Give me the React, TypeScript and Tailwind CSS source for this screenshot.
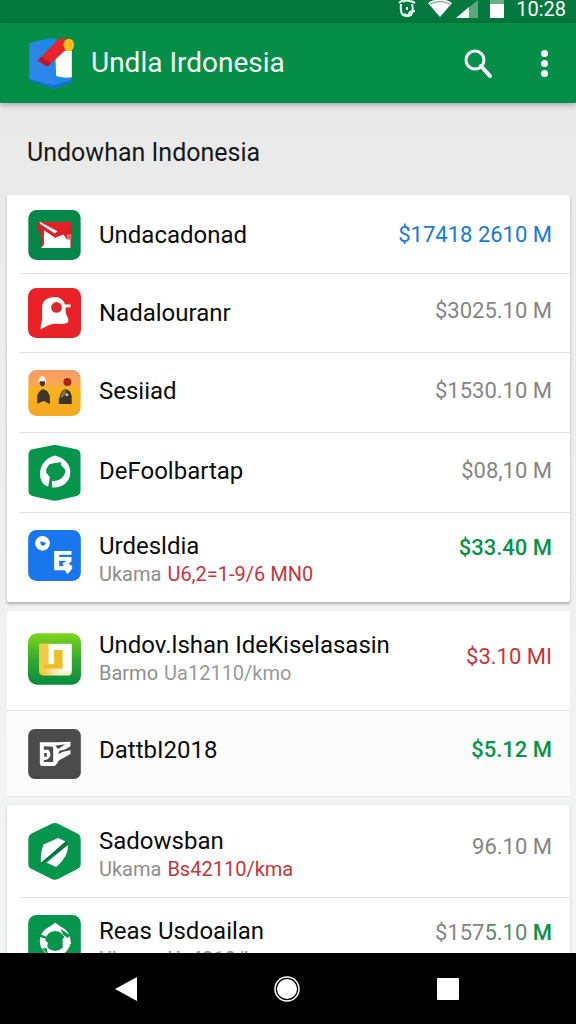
import type { ReactNode } from "react";

type Entry = {
  title: string;
  icon: ReactNode;
  price: ReactNode;
  tone: string;
  row: string;
  note?: { label: string; value: string; tone: string };
  textPad?: string;
  pricePad?: string;
};

const GRAY = "text-[#858585]";
const RED = "text-[#c9333a]";
const GREEN = "text-[#069447]";

function Logo() {
  return (
    <svg viewBox="84 106 140 162" className="h-[54px] w-[47px]" aria-hidden>
      <path d="M88 128 150 112 214 126V246L160 264 88 236Z" fill="#1e88e5" />
      <path d="M88 128 122 119V180L166 204V264L88 236Z" fill="#2b86ea" />
      <path d="M88 236 160 254 214 238V247L160 265 88 240Z" fill="#1473cc" />
      <path d="M166 176 192 150H215V230Q190 234 168 226Z" fill="#fff" />
      <path d="M112 180 176 114H206V138L142 198Z" fill="#e8232a" />
      <path d="M112 180 124 168 152 188 142 198Z" fill="#b5172b" />
      <ellipse cx="206" cy="133" rx="16" ry="19" fill="#fbbc14" />
    </svg>
  );
}

function MailIcon() {
  return (
    <svg viewBox="84 59 158 151" className="h-[50px] w-[53px]" aria-hidden>
      <rect x="84" y="59" width="158" height="151" rx="25" fill="#06874a" />
      <path d="M113 95H215V174H122V136L113 118Z" fill="#d71f26" />
      <path d="M131 120 165 143 190 133 200 147H211V174H122L131 164Z" fill="#fff" />
      <path d="M117 95H213V112L168 139 118 104Z" fill="#e02128" />
      <path d="M117 94 172 123 164 130 121 102Z" fill="#fff" />
      <path d="M200 132H214V147H200Z" fill="#e9656b" />
    </svg>
  );
}

function BirdIcon() {
  return (
    <svg viewBox="84 294 158 149" className="h-[50px] w-[53px]" aria-hidden>
      <rect x="84" y="294" width="158" height="149" rx="25" fill="#e92227" />
      <path
        d="M126 349C128 329 145 321 164 321 183 322 192 334 194 343L211 343V351L196 352C195 366 198 376 204 384V396C193 402 181 401 170 401 152 400 139 408 122 418 120 408 126 397 126 382Z"
        fill="#fff"
      />
      <circle cx="169" cy="352" r="16" fill="#e92227" />
      <circle cx="169" cy="353" r="12" fill="#d9292c" />
    </svg>
  );
}

function PeopleIcon() {
  return (
    <svg viewBox="84 59 158 139" className="h-[46px] w-[53px]" aria-hidden>
      <defs>
        <linearGradient id="people" x1="0" y1="0" x2="0" y2="1">
          <stop offset="0" stopColor="#f69a63" />
          <stop offset=".34" stopColor="#f8a84f" />
          <stop offset=".4" stopColor="#f9b51b" />
          <stop offset="1" stopColor="#f3a723" />
        </linearGradient>
      </defs>
      <rect x="84" y="59" width="158" height="139" rx="25" fill="url(#people)" />
      <path d="M113 95Q117 78 126 76 137 80 139 97L126 103Z" fill="#fff2de" />
      <path d="M118 93H134Q136 108 126 109 117 106 118 93Z" fill="#46332c" />
      <circle cx="202" cy="95" r="12" fill="#ad2412" />
      <path d="M111 161V135Q118 118 129 117 143 119 149 138V162L130 153Z" fill="#40352b" />
      <path d="M176 162V148Q183 116 197 117 211 119 215 138V162Z" fill="#3a3425" />
      <path d="M180 143Q184 122 195 119L200 131 188 141Z" fill="#7b7132" />
      <circle cx="201" cy="134" r="4" fill="#d8d4c0" />
    </svg>
  );
}

function CycleIcon() {
  return (
    <svg viewBox="84 282 158 170" className="h-[56px] w-[53px]" aria-hidden>
      <path
        d="M84 311Q84 299 96 295L150 284Q164 280 178 284L230 295Q242 299 242 311V422Q242 433 230 437L178 449Q164 454 150 449L96 437Q84 433 84 422Z"
        fill="#06954c"
      />
      <path
        d="M120 380C115 350 132 322 165 314 193 322 211 340 211 364 211 392 190 413 156 411L155 391C177 394 192 381 196 362L181 344 183 336C160 334 143 345 137 365L149 380 144 408C130 405 123 394 120 380Z"
        fill="#fff"
      />
      <path d="M137 356 148 340 184 334 182 343 197 359 187 368 174 364 163 384 147 375Z" fill="#06954c" />
    </svg>
  );
}

function ShareIcon() {
  return (
    <svg viewBox="84 72 158 153" className="h-[51px] w-[53px]" aria-hidden>
      <rect x="84" y="72" width="158" height="153" rx="25" fill="#1877ee" />
      <circle cx="127" cy="112" r="22" fill="#fff" />
      <path d="M121 106 137 110Q135 119 127 119 119 116 121 106Z" fill="#1877ee" />
      <path
        d="M162 135H214V146H177V153H214V166L205 173 216 179V188L202 205 194 193H162ZM177 164V180H190L187 172 200 165Z"
        fill="#fff"
        fillRule="evenodd"
      />
    </svg>
  );
}

function BadgeIcon() {
  return (
    <svg viewBox="84 84 158 153" className="h-[52px] w-[53px]" aria-hidden>
      <defs>
        <linearGradient id="badge" x1="0" y1="0" x2="0" y2="1">
          <stop offset="0" stopColor="#7ed51c" />
          <stop offset=".5" stopColor="#35ab2d" />
          <stop offset="1" stopColor="#078c3e" />
        </linearGradient>
        <linearGradient id="frame" x1="0" y1="0" x2="1" y2="0">
          <stop offset="0" stopColor="#f6bd22" />
          <stop offset=".6" stopColor="#fff3cc" />
        </linearGradient>
      </defs>
      <rect x="84" y="84" width="158" height="153" rx="27" fill="url(#badge)" />
      <path d="M117 115H214V201Q213 210 203 210H130Q118 209 117 199Z" fill="url(#frame)" />
      <path d="M145 117H214V197H187V134H162V176H145Z" fill="#fff" />
      <path d="M162 134H187V189H132V176H162Z" fill="#edbf22" />
      <path d="M117 115H145V176H132V203Q118 203 117 190Z" fill="#f2cb4d" />
    </svg>
  );
}

function CardIcon() {
  return (
    <svg viewBox="84 366 158 150" className="h-[50px] w-[53px]" aria-hidden>
      <rect x="84" y="366" width="158" height="150" rx="20" fill="#4b4b4c" />
      <path
        d="M119 406H171L211 404V418L181 436 211 430V441L177 460 167 474Q165 477 160 477H127Q119 477 119 467ZM131 418V428H145Q151 434 151 445 148 459 131 459V465H159V419ZM132 438V449H140V438Z"
        fill="#fff"
        fillRule="evenodd"
      />
      <path d="M165 416 195 412 174 426ZM174 442 202 426 178 431Z" fill="#4b4b4c" />
    </svg>
  );
}

function LeafIcon() {
  return (
    <svg viewBox="84 83 158 172" className="h-[57px] w-[53px]" aria-hidden>
      <path
        d="M84 133Q84 120 94 115L153 86Q164 80 175 86L232 115Q242 120 242 133V207Q242 218 232 222L175 251Q164 258 153 251L94 222Q84 218 84 207Z"
        fill="#06954c"
      />
      <path d="M122 203Q120 173 130 148L174 128 200 140Z" fill="#fff" />
      <path d="M139 203 204 149Q206 184 168 216Z" fill="#fff" />
      <path d="M110 215 199 136 204 149 118 211Z" fill="#087440" />
    </svg>
  );
}

function RingIcon() {
  return (
    <svg viewBox="84 360 158 156" className="h-[52px] w-[53px]" aria-hidden>
      <rect x="84" y="360" width="158" height="156" rx="25" fill="#06954c" />
      <circle cx="165" cy="438" r="38" fill="none" stroke="#fff" strokeWidth="16" />
      <path d="M150 394 165 383 180 394V402H150ZM187 431 202 424 213 444 200 464 188 456ZM119 440 128 430 143 443 140 463 126 458Z" fill="#fff" />
      <path d="M181 402 210 421 203 429 190 420ZM119 417 140 426 136 431 118 425ZM125 461 139 459 144 478Z" fill="#06954c" />
    </svg>
  );
}

const groups: { id: string; card: string; line: string; entries: Entry[] }[] = [
  {
    id: "first",
    card: "bg-white shadow-[0_2px_3px_rgba(0,0,0,0.28)]",
    line: "ml-3",
    entries: [
      { title: "Undacadonad", icon: <MailIcon />, price: "$17418 2610 M", tone: "text-[#137bdc]", row: "min-h-[78px] pt-px" },
      { title: "Nadalouranr", icon: <BirdIcon />, price: "$3025.10 M", tone: GRAY, row: "min-h-[78px]", pricePad: "pb-1" },
      { title: "Sesiiad", icon: <PeopleIcon />, price: "$1530.10 M", tone: GRAY, row: "min-h-[79px]", textPad: "pb-1", pricePad: "pb-1" },
      { title: "DeFoolbartap", icon: <CycleIcon />, price: "$08,10 M", tone: GRAY, row: "min-h-[79px]", textPad: "pb-1", pricePad: "pb-1" },
      {
        title: "Urdesldia",
        icon: <ShareIcon />,
        price: "$33.40 M",
        tone: `${GREEN} font-medium`,
        row: "min-h-[89px] pb-1",
        note: { label: "Ukama", value: "U6,2=1-9/6 MN0", tone: RED },
        textPad: "pt-2",
        pricePad: "pb-4",
      },
    ],
  },
  {
    id: "second",
    card: "bg-white shadow-[0_1px_1px_rgba(0,0,0,0.06)]",
    line: "",
    entries: [
      {
        title: "Undov.lshan IdeKiselasasin",
        icon: <BadgeIcon />,
        price: "$3.10 MI",
        tone: RED,
        row: "min-h-[99px] pb-1",
        note: { label: "Barmo", value: "Ua12110/kmo", tone: "text-[#999999]" },
        pricePad: "pb-1",
      },
      { title: "DattbI2018", icon: <CardIcon />, price: "$5.12 M", tone: `${GREEN} font-medium`, row: "min-h-[85px] bg-[#fcfcfc]", textPad: "pb-2", pricePad: "pb-2" },
    ],
  },
  {
    id: "third",
    card: "bg-white shadow-[0_1px_3px_rgba(0,0,0,0.2)]",
    line: "ml-3",
    entries: [
      {
        title: "Sadowsban",
        icon: <LeafIcon />,
        price: "96.10 M",
        tone: GRAY,
        row: "min-h-[92px]",
        note: { label: "Ukama", value: "Bs42110/kma", tone: RED },
        textPad: "pt-2",
        pricePad: "pb-2",
      },
      {
        title: "Reas Usdoailan",
        icon: <RingIcon />,
        price: (
          <>
            $157<span className="text-[#5c8a6c]">5.10</span> <span className={`${GREEN} font-medium`}>M</span>
          </>
        ),
        tone: GRAY,
        row: "min-h-[86px]",
        note: { label: "Ukama", value: "Us4210/kma", tone: "text-[#8e8e8e]" },
        textPad: "pt-2",
        pricePad: "pb-4",
      },
    ],
  },
];

function EntryRow({ entry }: { entry: Entry }) {
  return (
    <div className={`flex items-center pr-[18px] pl-[21px] ${entry.row}`}>
      <span className="shrink-0">{entry.icon}</span>
      <div className={`ml-[18px] min-w-0 flex-1 whitespace-nowrap ${entry.textPad ?? ""}`}>
        <h2 className="text-2xl leading-7 text-[#0c0c0c]">{entry.title}</h2>
        {entry.note && (
          <p className="flex gap-[6px] text-xl leading-7 text-[#8e8e8e]">
            <span>{entry.note.label}</span>
            <span className={entry.note.tone}>{entry.note.value}</span>
          </p>
        )}
      </div>
      <span className={`shrink-0 text-[22px] leading-7 ${entry.tone} ${entry.pricePad ?? ""}`}>{entry.price}</span>
    </div>
  );
}

function StatusBar() {
  return (
    <div className="flex h-[23px] items-start justify-end overflow-hidden bg-[#04783e] pr-[10px] text-white">
      <svg viewBox="0 0 18 18" className="mr-3 h-[18px] w-[18px]" fill="none" stroke="#e8fff2" strokeWidth="2" aria-hidden>
        <path d="M1 3 5 0M13 1 17 3M3 4Q2 12 5 15 9 17 13 15 16 10 14 4M5 2Q9-1 13 2" />
        <path d="M9 7V10M6 14 10 16 12 12 17 11" />
      </svg>
      <svg viewBox="0 0 24 17" className="mr-1 h-[17px] w-6" aria-hidden>
        <path d="M0 3Q12-5 24 3L12 17Z" fill="#fff" />
        <path d="M2 4Q12-1 22 4" fill="none" stroke="#4e9b73" strokeWidth="1" />
      </svg>
      <svg viewBox="0 0 22 18" className="mr-3 h-[18px] w-[22px]" aria-hidden>
        <path d="M0 18 22 0V18Z" fill="#5aa67d" />
        <path d="M0 18 13 7V18Z" fill="#f2fff8" />
      </svg>
      <svg viewBox="0 0 14 18" className="mr-3 h-[18px] w-[14px]" aria-hidden>
        <path d="M0 0H14V4H0Z" fill="#6cae8b" />
        <path d="M0 4H14V18H0Z" fill="#fff" />
      </svg>
      <span className="text-xl leading-[18px]">10:28</span>
    </div>
  );
}

export default function App() {
  return (
    <div className="flex h-screen flex-col overflow-hidden bg-[#efeff0] font-[Roboto,sans-serif]">
      <StatusBar />
      <header className="relative z-10 flex h-20 shrink-0 items-center bg-[#048e48] pr-6 pl-7 shadow-[0_2px_6px_rgba(0,0,0,0.3)]">
        <Logo />
        <h1 className="ml-4 flex-1 text-[28px] leading-9 text-[#f2fff6]">Undla Irdonesia</h1>
        <button type="button" aria-label="Search" className="mr-9 grid size-11 place-items-center">
          <svg viewBox="0 0 28 29" className="h-[29px] w-7" fill="none" stroke="#fff" aria-hidden>
            <circle cx="11" cy="11" r="9" strokeWidth="3" />
            <path d="M17 17 26 27" strokeWidth="4" strokeLinecap="round" />
          </svg>
        </button>
        <button type="button" aria-label="More options" className="flex w-4 flex-col items-center gap-[3px]">
          <span className="size-[7px] rounded-full bg-white" />
          <span className="size-[7px] rounded-full bg-white" />
          <span className="size-[7px] rounded-full bg-white" />
        </button>
      </header>

      <main className="min-h-0 flex-1 overflow-hidden bg-linear-to-b from-[#e9e9ea] via-[#efeff0] to-[#f4f5f5] pr-[6px] pl-[7px]">
        <p className="px-5 pt-[34px] pb-[26px] text-[25px] leading-8 text-[#171717]">Undowhan Indonesia</p>
        <div className="flex flex-col gap-[9px]">
          {groups.map((group) => (
            <ul key={group.id} className={`rounded-xs ${group.card}`}>
              {group.entries.map((entry, i) => (
                <li key={entry.title}>
                  {i > 0 && <div className={`h-px bg-[#e2e3e4] ${group.line}`} />}
                  <EntryRow entry={entry} />
                </li>
              ))}
            </ul>
          ))}
        </div>
      </main>

      <nav className="flex h-[71px] shrink-0 items-center justify-between bg-black pr-[117px] pl-[115px]">
        <button type="button" aria-label="Back">
          <svg viewBox="0 0 22 24" className="h-6 w-[22px]" fill="#fff" aria-hidden>
            <path d="M0 12 22 0V24Z" />
          </svg>
        </button>
        <button type="button" aria-label="Home">
          <svg viewBox="0 0 26 26" className="size-[26px]" aria-hidden>
            <circle cx="13" cy="13" r="12" fill="none" stroke="#fff" strokeWidth="1.5" />
            <circle cx="13" cy="13" r="10" fill="#fff" />
          </svg>
        </button>
        <button type="button" aria-label="Recent apps">
          <svg viewBox="0 0 22 22" className="size-[22px]" fill="#fff" aria-hidden>
            <rect width="22" height="22" rx="1" />
          </svg>
        </button>
      </nav>
    </div>
  );
}
